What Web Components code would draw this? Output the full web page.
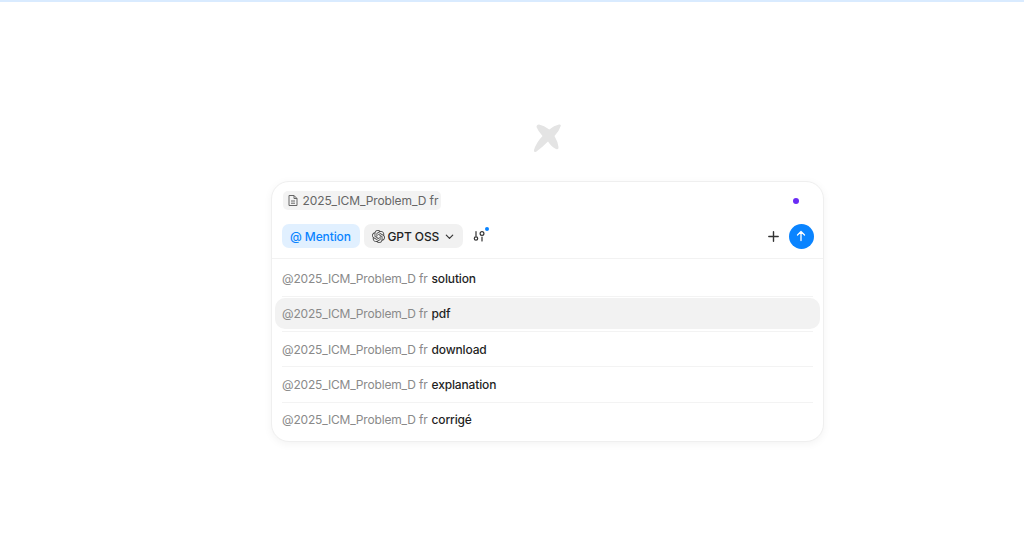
<!DOCTYPE html>
<html>
<head>
<meta charset="utf-8">
<title>Search</title>
<style>
  html, body { margin: 0; height: 100%; background: #fff; overflow: hidden; }
  body { font-family: Inter, "Noto Sans", sans-serif; }
</style>
</head>
<body>
<search-page>
  <search-box>
    <attach-chip slot="attachments">2025_ICM_Problem_D fr</attach-chip>
    <suggest-row prefix="@2025_ICM_Problem_D fr">solution</suggest-row>
    <suggest-row prefix="@2025_ICM_Problem_D fr" active>pdf</suggest-row>
    <suggest-row prefix="@2025_ICM_Problem_D fr">download</suggest-row>
    <suggest-row prefix="@2025_ICM_Problem_D fr">explanation</suggest-row>
    <suggest-row prefix="@2025_ICM_Problem_D fr" last>corrigé</suggest-row>
  </search-box>
</search-page>

<script>
class SearchPage extends HTMLElement {
  connectedCallback() {
    this.attachShadow({ mode: 'open' }).innerHTML = `
    <style>
      :host{
        display: flex;
        flex-direction: column;
        align-items: center;
        height: 539px;
        padding-left: 70px;
        border-top: 2px solid #d9ebff;
        box-sizing: border-box;
      }
      .logo{
        width: 30px;
        height: 30px;
        margin-top: 121px;
        margin-bottom: 28px;
        margin-left: 1px;
        display: block;
      }
    </style>
    <svg class="logo" viewBox="0 0 30 30">
      <path fill="#e4e4e4" d="M6 1.500Q11 2.500 16.300 6.500Q21 2.500 26 1.500Q28.500 1.200 27.500 3.500Q26 8.500 21.500 13Q25 19 25.500 24Q25.800 27 23 26Q18.500 24 15 18.500Q9 24.500 3.500 28.500Q.5 30 1 27Q3 20 9.500 13Q5 8 3.500 4Q3.500 1.500 6 1.500Z"/>
    </svg>
    <slot></slot>`
  }
}

class SearchBox extends HTMLElement {
  connectedCallback() {
    this.attachShadow({ mode: 'open' }).innerHTML = `
    <style>
      :host{
        display: block;
        width: 553px;
        height: 261px;
        box-sizing: border-box;
        border: 1px solid #efefef;
        border-radius: 18px;
        background: #fff;
        box-shadow: 0 2px 8px rgba(0,0,0,.05);
        font-size: 12px;
        letter-spacing: -.1px;
      }
      .top{
        display: flex;
        align-items: center;
        justify-content: space-between;
        height: 19px;
        margin-top: 9px;
        padding: 0 24px 0 11px;
      }
      .dot{
        width: 6px;
        height: 6px;
        border-radius: 50%;
        background: #6a2cf5;
      }
      .tools{
        display: flex;
        align-items: center;
        gap: 4px;
        height: 24px;
        margin-top: 14px;
        padding: 0 9px 0 10px;
      }
      .mention{
        display: flex;
        align-items: center;
        justify-content: center;
        gap: 3px;
        width: 78px;
        height: 24px;
        border-radius: 7px;
        background: #e1f0ff;
        color: #0a84ff;
        font-weight: 500;
      }
      .model{
        display: flex;
        align-items: center;
        gap: 3px;
        height: 24px;
        width: 99px;
        box-sizing: border-box;
        padding-left: 8px;
        border-radius: 7px;
        background: #f1f1f1;
        color: #222;
        font-weight: 500;
      }
      .tune{
        position: relative;
        width: 20px;
        height: 24px;
        margin-left: 2px;
        display: flex;
        align-items: center;
        justify-content: center;
      }
      .badge{
        position: absolute;
        top: 3px;
        right: 0;
        width: 4px;
        height: 4px;
        border-radius: 50%;
        background: #0a84ff;
      }
      .spacer{ flex: 1; }
      .plus{ display: block; margin-right: 5px; }
      .send{
        width: 25px;
        height: 25px;
        border-radius: 50%;
        background: #0a84ff;
        display: flex;
        align-items: center;
        justify-content: center;
      }
      .list{
        margin-top: 10px;
        border-top: 1px solid #f2f2f2;
        padding: 3.5px 3px 0;
      }
    </style>
    <div class="top">
      <slot name="attachments"></slot>
      <span class="dot"></span>
    </div>
    <div class="tools">
      <div class="mention"><span>@</span><span>Mention</span></div>
      <div class="model">
        <svg width="13" height="13" viewBox="0 0 24 24" fill="#444">
          <path d="M22.2819 9.8211a5.9847 5.9847 0 0 0-.5157-4.9108 6.0462 6.0462 0 0 0-6.5098-2.9A6.0651 6.0651 0 0 0 4.9807 4.1818a5.9847 5.9847 0 0 0-3.9977 2.9 6.0462 6.0462 0 0 0 .7427 7.0966 5.98 5.98 0 0 0 .511 4.9107 6.051 6.051 0 0 0 6.5146 2.9001A5.9847 5.9847 0 0 0 13.2599 24a6.0557 6.0557 0 0 0 5.7718-4.2058 5.9894 5.9894 0 0 0 3.9977-2.9001 6.0557 6.0557 0 0 0-.7475-7.0729zm-9.022 12.6081a4.4755 4.4755 0 0 1-2.8764-1.0408l.1419-.0804 4.7783-2.7582a.7948.7948 0 0 0 .3927-.6813v-6.7369l2.02 1.1686a.071.071 0 0 1 .038.052v5.5826a4.504 4.504 0 0 1-4.4945 4.4944zm-9.6607-4.1254a4.4708 4.4708 0 0 1-.5346-3.0137l.142.0852 4.783 2.7582a.7712.7712 0 0 0 .7806 0l5.8428-3.3685v2.3324a.0804.0804 0 0 1-.0332.0615L9.74 19.9502a4.4992 4.4992 0 0 1-6.1408-1.6464zM2.3408 7.8956a4.485 4.485 0 0 1 2.3655-1.9728V11.6a.7664.7664 0 0 0 .3879.6765l5.8144 3.3543-2.0201 1.1685a.0757.0757 0 0 1-.071 0l-4.8303-2.7865A4.504 4.504 0 0 1 2.3408 7.872zm16.5963 3.8558L13.1038 8.364 15.1192 7.2a.0757.0757 0 0 1 .071 0l4.8303 2.7913a4.4944 4.4944 0 0 1-.6765 8.1042v-5.6772a.79.79 0 0 0-.407-.667zm2.0107-3.0231l-.142-.0852-4.7735-2.7818a.7759.7759 0 0 0-.7854 0L9.409 9.2297V6.8974a.0662.0662 0 0 1 .0284-.0615l4.8303-2.7866a4.4992 4.4992 0 0 1 6.6802 4.66zM8.3065 12.863l-2.02-1.1638a.0804.0804 0 0 1-.038-.0567V6.0742a4.4992 4.4992 0 0 1 7.3757-3.4537l-.142.0805L8.704 5.459a.7948.7948 0 0 0-.3927.6813zm1.0976-2.3654l2.602-1.4998 2.6069 1.4998v2.9994l-2.5974 1.4997-2.6067-1.4997Z"/>
        </svg>
        <span>GPT OSS</span>
        <svg style="margin-left:2px" width="11" height="11" viewBox="0 0 12 12" fill="none" stroke="#333" stroke-width="1.3" stroke-linecap="round" stroke-linejoin="round"><path d="M2.500 4.500 6 8l3.500-3.500"/></svg>
      </div>
      <div class="tune">
        <svg width="12" height="12" viewBox="0 0 12 12" fill="none" stroke="#333" stroke-width="1.200" stroke-linecap="round">
          <path d="M3 1.500v4.500M9 7v4"/>
          <circle cx="3" cy="8.500" r="1.700"/>
          <circle cx="9" cy="3.500" r="1.900"/>
        </svg>
        <span class="badge"></span>
      </div>
      <span class="spacer"></span>
      <svg class="plus" width="13" height="13" viewBox="0 0 13 13" fill="none" stroke="#333" stroke-width="1.400" stroke-linecap="round"><path d="M6.500 1.800v9.400M1.800 6.500h9.400"/></svg>
      <div class="send">
        <svg width="12" height="12" viewBox="0 0 12 12" fill="none" stroke="#fff" stroke-width="1.300" stroke-linecap="round" stroke-linejoin="round"><path d="M6 10.500v-9M2.500 5 6 1.500 9.500 5"/></svg>
      </div>
    </div>
    <div class="list"><slot></slot></div>`
  }
}

class AttachChip extends HTMLElement {
  connectedCallback() {
    this.attachShadow({ mode: 'open' }).innerHTML = `
    <style>
      :host{
        display: inline-flex;
        align-items: center;
        gap: 4px;
        height: 19px;
        padding: 0 3px 0 4px;
        border-radius: 5px;
        background: #f3f3f3;
        color: #666;
        font-size: 12px;
        white-space: nowrap;
      }
      svg{ display: block; }
    </style>
    <svg width="12" height="13" viewBox="0 0 12 13" fill="none" stroke="#666" stroke-width="1" stroke-linejoin="round">
      <path d="M2 1.500h5L10 4.500v7H2z"/>
      <path d="M7 1.500v3h3M4 7h4M4 9.200h4"/>
    </svg>
    <slot></slot>`
  }
}

class SuggestRow extends HTMLElement {
  connectedCallback() {
    const prefix = this.getAttribute('prefix');
    this.attachShadow({ mode: 'open' }).innerHTML = `
    <style>
      :host{
        display: block;
        position: relative;
        height: 35.4px;
        font-size: 12px;
      }
      .inner{
        display: flex;
        align-items: center;
        gap: 4px;
        height: 31.5px;
        padding: 0 7.5px;
        border-radius: 10px;
        white-space: nowrap;
      }
      :host([active]) .inner{ background: #f2f2f2; }
      .line{
        height: 1px;
        margin: 1.5px 7px 0;
        background: #f3f3f3;
      }
      :host([last]) .line{ display: none; }
      .pre{ color: #8a8a8a; letter-spacing: -.18px; }
      .term{ color: #1f1f1f; font-weight: 500; letter-spacing: -.15px; }
    </style>
    <div class="inner"><span class="pre">${prefix}</span><span class="term"><slot></slot></span></div>
    <div class="line"></div>`
  }
}

customElements.define('search-page', SearchPage);
customElements.define('search-box', SearchBox);
customElements.define('attach-chip', AttachChip);
customElements.define('suggest-row', SuggestRow);
</script>
</body>
</html>
